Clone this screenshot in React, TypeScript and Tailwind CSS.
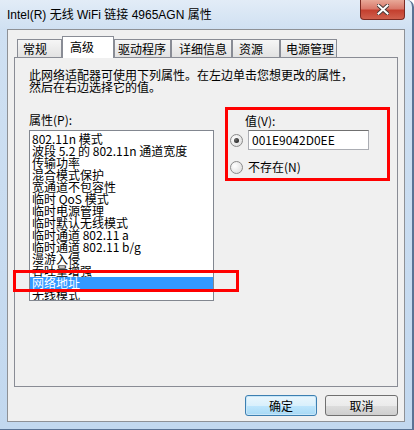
import React from "react";

const tabs = [
  { label: "常规", cls: "w-[45px] pl-[5px]" },
  { label: "高级", cls: "w-[52px] pl-[7px]", active: true },
  { label: "驱动程序", cls: "w-[57px] pl-[3px]" },
  { label: "详细信息", cls: "w-[61px] pl-[7px]" },
  { label: "资源", cls: "w-[48px] pl-[6px]" },
  { label: "电源管理", cls: "w-[57px] pl-[5px]" },
];

const props = [
  "802.11n 模式",
  "波段 5.2 的 802.11n 通道宽度",
  "传输功率",
  "混合模式保护",
  "宽通道不包容性",
  "临时 QoS 模式",
  "临时电源管理",
  "临时默认无线模式",
  "临时通道 802.11 a",
  "临时通道 802.11 b/g",
  "漫游入侵",
  "吞吐量增强",
  "网络地址",
  "无线模式",
];

function Radio({ checked }: { checked?: boolean }) {
  return (
    <div className="w-[13px] h-[13px] rounded-full border border-[#8a8a8a] bg-[radial-gradient(circle_at_35%_35%,#ffffff,#d8d8d8)] flex items-center justify-center shrink-0">
      {checked && (
        <div className="w-[5px] h-[5px] rounded-full bg-[radial-gradient(circle_at_35%_35%,#6b6b6b,#111111)]" />
      )}
    </div>
  );
}

function CloseButton() {
  return (
    <div className="absolute right-[7px] top-0 w-[45px] h-[20px] rounded-b-[4px] border border-t-0 border-[#7b2a22] bg-[linear-gradient(to_bottom,#e8a898_0%,#d9796b_45%,#c4402f_55%,#d0604d_100%)] flex items-center justify-center">
      <svg width="12" height="11" viewBox="0 0 12 11">
        <path d="M1.5 1.5 L10.5 9.5 M10.5 1.5 L1.5 9.5" stroke="#4a3a38" strokeWidth="4" strokeLinecap="square" />
        <path d="M1.5 1.5 L10.5 9.5 M10.5 1.5 L1.5 9.5" stroke="#ffffff" strokeWidth="2" strokeLinecap="square" />
      </svg>
    </div>
  );
}

export default function App() {
  return (
    <div
      className="relative w-[414px] h-[430px] overflow-hidden bg-white text-black"
      style={{ fontFamily: '"Noto Sans CJK SC", sans-serif' }}
    >
      <div className="w-full h-full flex flex-col rounded-tr-[7px] border-r-[2px] border-b border-[#5a7394] bg-[linear-gradient(to_bottom,#e2ecf7_0px,#cfe0f2_30px,#c2d8ef_100%)]">
        {/* Title bar */}
        <div className="relative h-[29px] shrink-0">
          <div
            className="pl-[7px] pt-[6px] text-[12px] leading-[18px] text-black"
            style={{ fontFamily: '"Liberation Sans", "Noto Sans CJK SC", sans-serif' }}
          >
            Intel(R) 无线 WiFi 链接 4965AGN 属性
          </div>
          <CloseButton />
        </div>

        {/* Client area */}
        <div className="mx-[7px] h-[393px] border border-[#8e9196] bg-[#f0f0f0] pl-[6px] pt-[6px] text-[12px] leading-[12px]">
          {/* Tabs */}
          <div className="flex items-end h-[21px] ml-[3px]">
            {tabs.map((t) =>
              t.active ? (
                <div
                  key={t.label}
                  className={`relative z-10 h-[22px] -mb-px border border-b-0 border-[#898c95] bg-white pt-[4px] ${t.cls}`}
                >
                  {t.label}
                </div>
              ) : (
                <div
                  key={t.label}
                  className={`h-[18px] border border-b-0 border-[#898c95] bg-[linear-gradient(to_bottom,#f6f6f6,#e2e2e2)] pt-[3px] ${t.cls}`}
                >
                  {t.label}
                </div>
              )
            )}
          </div>

          {/* Panel */}
          <div className="w-[384px] h-[330px] border border-[#898c95] bg-[#f0f0f0] pl-[14px] pt-[11px]">
            <div>此网络适配器可使用下列属性。在左边单击您想更改的属性，</div>
            <div>然后在右边选择它的值。</div>

            <div className="flex mt-[21px]">
              <div>
                <div>属性(P):</div>
                <div className="mt-[4px] w-[185px] h-[171px] border border-[#828790] bg-white pt-[2px] overflow-hidden">
                  {props.map((p) => (
                    <div
                      key={p}
                      className={
                        p === "网络地址"
                          ? "pl-[2px] h-[12px] leading-[12px] whitespace-nowrap bg-[#3399ff] text-white"
                          : "pl-[2px] h-[12px] leading-[12px] whitespace-nowrap"
                      }
                    >
                      {p}
                    </div>
                  ))}
                </div>
              </div>

              <div className="ml-[16px] pt-[1px]">
                <div className="pl-[15px]">值(V):</div>
                <div className="mt-[3px] flex items-center">
                  <Radio checked />
                  <div className="ml-[5px] w-[121px] h-[20px] border border-[#abadb3] border-t-[#707070] bg-white pl-[3px] flex items-center">
                    001E9042D0EE
                  </div>
                </div>
                <div className="mt-[10px] flex items-center h-[14px]">
                  <Radio />
                  <div className="ml-[5px]">不存在(N)</div>
                </div>
              </div>
            </div>
          </div>

          {/* Buttons */}
          <div className="w-[384px] flex justify-end gap-[8px] mt-[8px]">
            <div className="w-[72px] h-[21px] rounded-[3px] border border-[#3c7fb1] bg-[linear-gradient(to_bottom,#eaf6fd_0%,#d9f0fc_50%,#bee6fd_51%,#a7d9f5_100%)] shadow-[inset_0_0_0_1px_#c8e6f8] flex items-center justify-center">
              确定
            </div>
            <div className="w-[73px] h-[21px] rounded-[3px] border border-[#707070] bg-[linear-gradient(to_bottom,#f2f2f2_0%,#ebebeb_50%,#dddddd_51%,#cfcfcf_100%)] flex items-center justify-center">
              取消
            </div>
          </div>
        </div>
      </div>

      {/* Red annotation boxes */}
      <div className="absolute left-[13px] top-[270px] w-[226px] h-[22px] border-[3px] border-[#ff0000]" />
      <div className="absolute left-[225px] top-[107px] w-[165px] h-[74px] border-[3px] border-[#ff0000]" />
    </div>
  );
}
